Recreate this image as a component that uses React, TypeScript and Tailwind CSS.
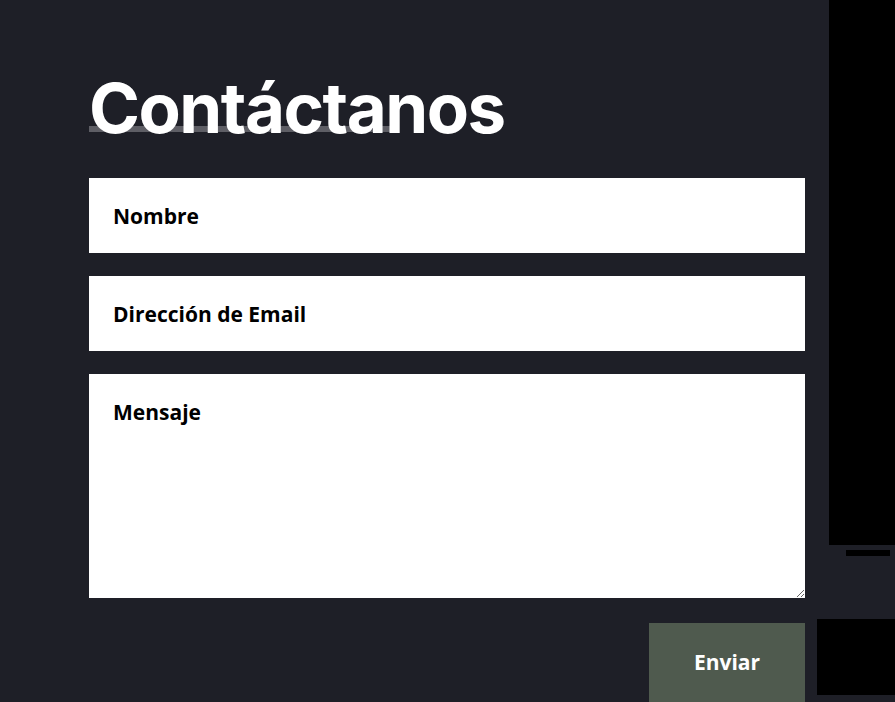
export default function App() {
  return (
    <div className="h-[702px] w-full overflow-hidden bg-[#1e1f27]">
      <div className="flex items-start">
        <div className="w-[829px] pl-[89px] pr-[24px]">
          <h1 className="relative mt-[66px] inline-block font-['Inter',sans-serif] text-[69px] font-bold leading-[84px] tracking-[-1.5px] text-white">
            <span className="absolute left-0 top-[60px] h-[6px] w-[306px] bg-[#5e5e65]" />
            <span className="relative">Contáctanos</span>
          </h1>
          <form className="mt-[28px] flex flex-col gap-[23px] font-['Open_Sans',sans-serif]">
            <input
              className="h-[75px] w-full bg-white pl-[24px] pr-[25px] text-[21px] font-bold text-black outline-none placeholder:text-black"
              placeholder="Nombre"
              type="text"
            />
            <input
              className="h-[75px] w-full bg-white pl-[24px] pr-[25px] text-[21px] font-bold text-black outline-none placeholder:text-black"
              placeholder="Dirección de Email"
              type="email"
            />
            <textarea
              className="block h-[224px] w-full bg-white pl-[24px] pr-[25px] pt-[23px] text-[21px] font-bold text-black outline-none placeholder:text-black"
              placeholder="Mensaje"
            />
          </form>
        </div>
        <div className="w-[66px]">
          <div className="h-[545px] bg-black" />
          <div className="ml-[17px] mt-[5px] h-[6px] w-[44px] bg-black" />
        </div>
      </div>
      <div className="mt-[21px] flex items-start justify-end">
        <button
          className="mt-[4px] h-[79px] w-[156px] bg-[#4f5a4e] font-['Open_Sans',sans-serif] text-[21px] font-bold text-white"
          type="button"
        >
          Enviar
        </button>
        <div className="ml-[12px] h-[76px] w-[78px] bg-black" />
      </div>
    </div>
  );
}
